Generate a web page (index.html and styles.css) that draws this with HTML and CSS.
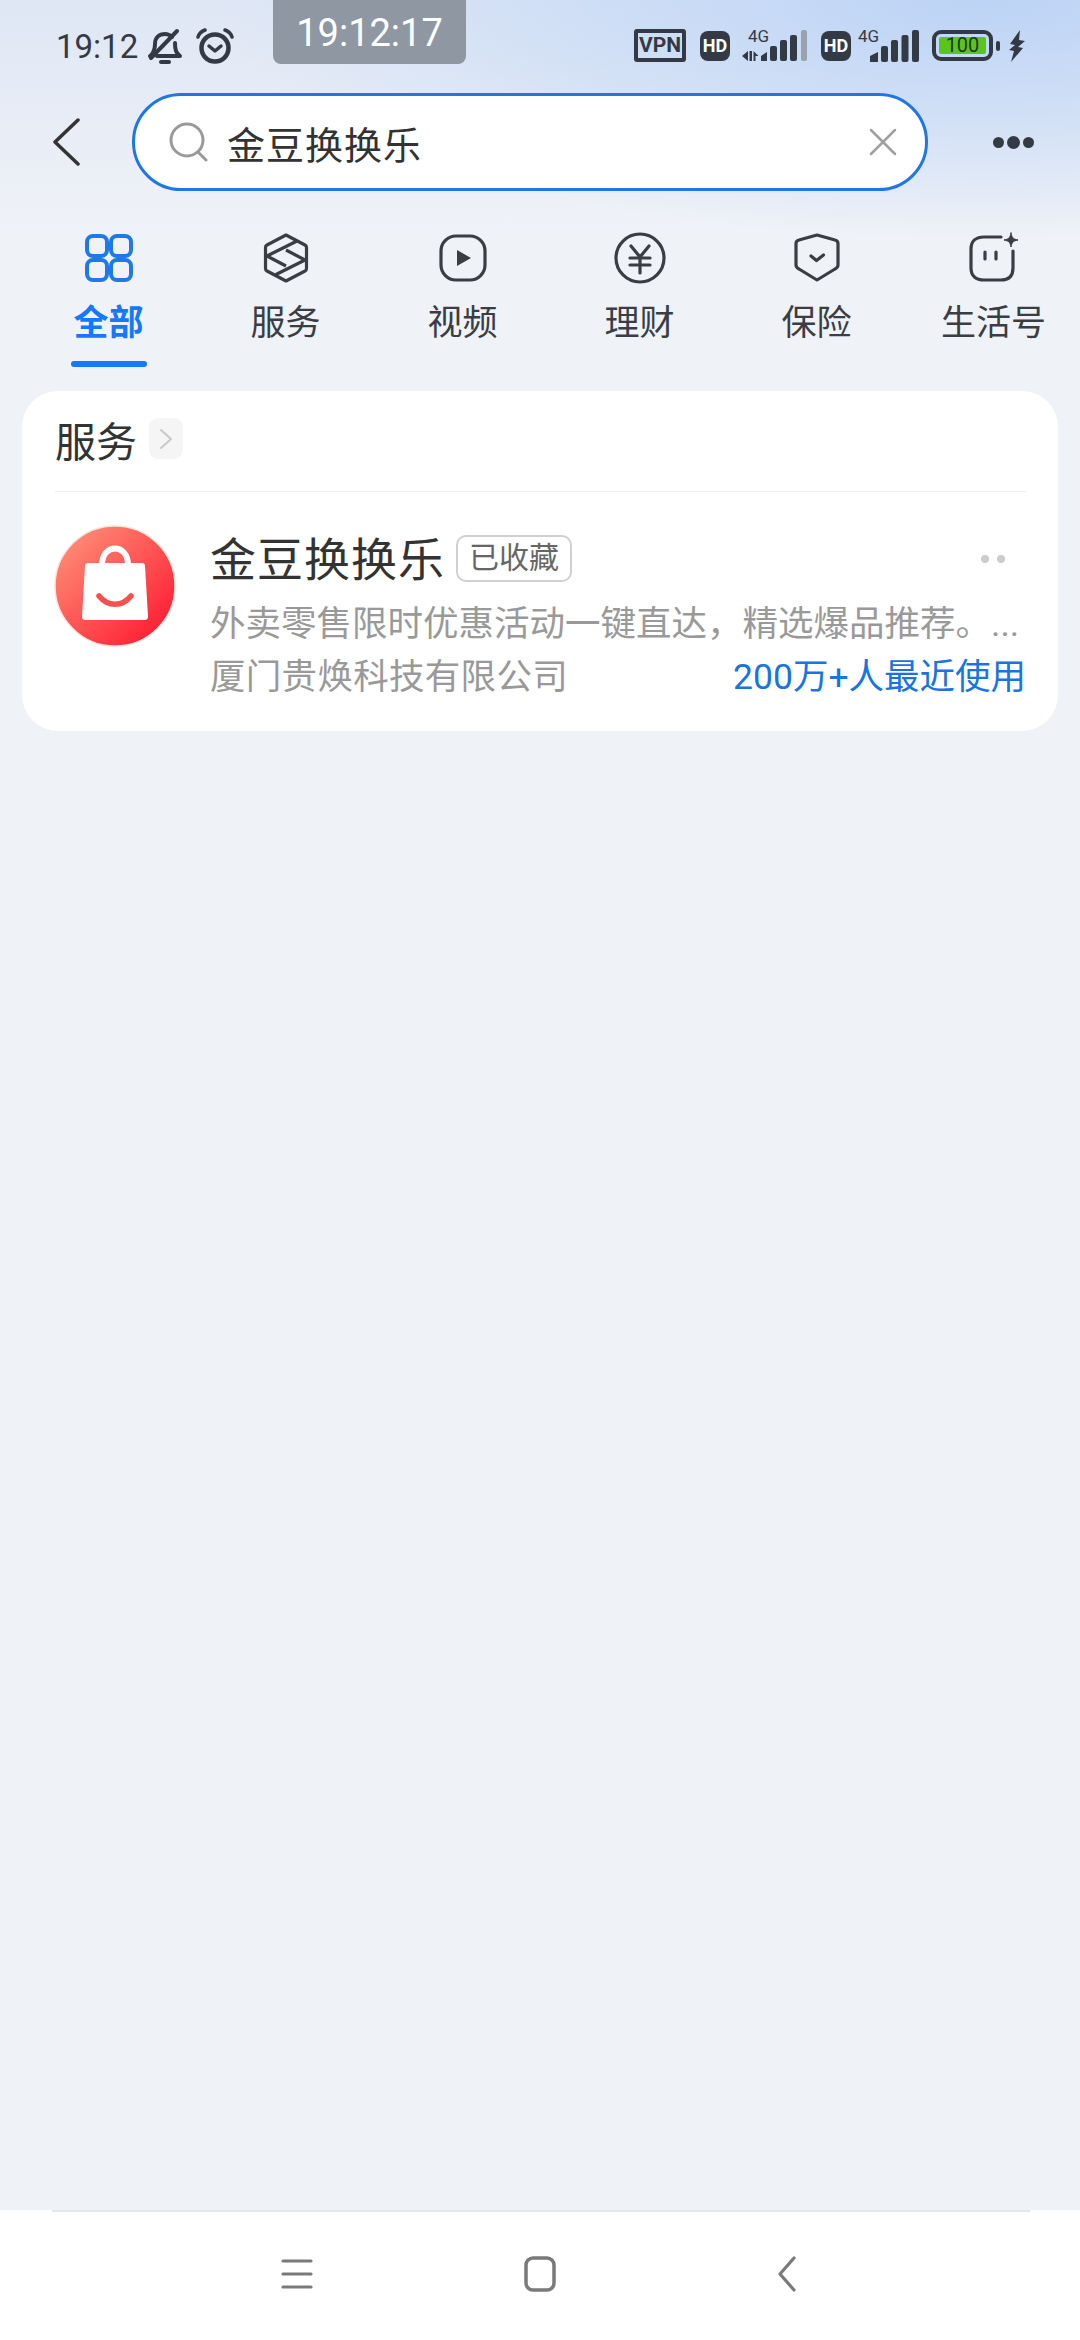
FILE: index.html
```html
<!DOCTYPE html>
<html>
<head>
    <title>金豆换换乐</title>
    <link rel="stylesheet" href="styles.css">
</head>
<body>
    <div class="toast">19:12:17</div>

    <div class="status-bar">
        <span class="status-time">19:12</span>
        <svg class="status-bell" width="36" height="38" viewBox="0 0 36 38" fill="none" stroke="#343a45" stroke-width="4" stroke-linecap="round" stroke-linejoin="round">
            <path d="M3 28c4-3 5-6 5-12 0-6 4-10 10-10 3 0 5 1 7 3M28 15c0 7 1 10 5 13H10"/>
            <path d="M30 3L4 30"/>
            <path d="M14 34h8" stroke-width="4"/>
        </svg>
        <svg class="status-alarm" width="38" height="36" viewBox="0 0 38 36" fill="none" stroke="#343a45" stroke-linecap="round" stroke-linejoin="round">
            <circle cx="19" cy="20" r="13.5" stroke-width="4.5"/>
            <path d="M13 18l6 5 6-5" stroke-width="3.5"/>
            <path d="M2 9c1-3 4-6 7-7M36 9c-1-3-4-6-7-7" stroke-width="3.5"/>
        </svg>

        <div class="status-right">
            <span class="vpn-box">VPN</span>
            <span class="hd-box hd-first">HD</span>
            <svg class="signal signal-first" width="68" height="42" viewBox="0 -8 68 42">
                <text class="net-text" x="7" y="13">4G</text>
                <path fill="#343a45" d="M1 27l6-5v10zM8.500 22h2.500v10H8.500zM12.500 22l5 5h-3v5h-2zM20 27l6-4v9h-6z"/>
                <rect x="29" y="17" width="7" height="15" rx="2" fill="#343a45"/>
                <rect x="39" y="11" width="7" height="21" rx="2" fill="#343a45"/>
                <rect x="49" y="6" width="7" height="26" rx="2" fill="#343a45"/>
                <rect x="60" y="1" width="6" height="31" rx="2" fill="#9aa3ad"/>
            </svg>
            <span class="hd-box hd-second">HD</span>
            <svg class="signal signal-second" width="62" height="42" viewBox="0 -8 62 42">
                <text class="net-text" x="1" y="13">4G</text>
                <path fill="#343a45" d="M13 27l8-4v10h-8z"/>
                <rect x="24" y="17" width="7" height="16" rx="2" fill="#343a45"/>
                <rect x="34" y="11" width="7" height="22" rx="2" fill="#343a45"/>
                <rect x="44.500" y="6" width="7" height="27" rx="2" fill="#343a45"/>
                <rect x="55" y="1" width="7" height="32" rx="2" fill="#343a45"/>
            </svg>
            <div class="battery">
                <div class="battery-fill">100</div>
            </div>
            <span class="battery-nub"></span>
            <svg class="bolt" width="18" height="32" viewBox="0 0 18 32" fill="#343a45">
                <path d="M12 0L2 14l5 1-6 5 5 1-3 11 12-14-5-1 7-6-6-1z"/>
            </svg>
        </div>
    </div>

    <div class="nav-row">
        <svg width="28" height="48" viewBox="0 0 28 48" fill="none" stroke="#333" stroke-width="3.5" stroke-linecap="round" stroke-linejoin="round">
            <path d="M26 2L3 24l23 22"/>
        </svg>
        <div class="search-box">
            <svg class="search-icon" width="40" height="40" viewBox="0 0 40 40" fill="none" stroke="#9a9a9a" stroke-width="3" stroke-linecap="round">
                <circle cx="18" cy="18" r="16"/>
                <path d="M30 31l7 7"/>
            </svg>
            <span class="search-text">金豆换换乐</span>
            <svg class="search-clear" width="28" height="28" viewBox="0 0 28 28" fill="none" stroke="#a0a0a0" stroke-width="2.500" stroke-linecap="round">
                <path d="M2 2l24 24M26 2L2 26"/>
            </svg>
        </div>
        <div class="more-dots"><i></i><i class="dot-mid"></i><i></i></div>
    </div>

    <div class="tabs">
        <div class="tab tab-active">
            <svg width="52" height="52" viewBox="0 0 52 52" fill="none" stroke="#1f7ae8" stroke-width="4">
                <rect x="4" y="4" width="20" height="20" rx="6"/>
                <rect x="28" y="4" width="20" height="20" rx="6"/>
                <rect x="4" y="28" width="20" height="20" rx="6"/>
                <rect x="28" y="28" width="20" height="20" rx="6"/>
            </svg>
            <span class="tab-label">全部</span>
            <span class="tab-line"></span>
        </div>
        <div class="tab">
            <svg width="52" height="52" viewBox="0 0 52 52" fill="none" stroke="#3a3d44" stroke-width="3.2" stroke-linejoin="round">
                <path d="M26 3l19 10c1 .5 1.500 1 1.500 2.500v21c0 1.500-.5 2-1.500 2.500L26 49 7 39c-1-.5-1.500-1-1.500-2.500v-21C5.500 14 6 13.500 7 13z"/>
                <path d="M37 9L7 24l19 10M15 43l30-15-19-10"/>
            </svg>
            <span class="tab-label">服务</span>
        </div>
        <div class="tab">
            <svg width="52" height="52" viewBox="0 0 52 52" fill="none" stroke="#3a3d44" stroke-width="3.2">
                <rect x="4" y="4" width="44" height="44" rx="15"/>
                <path d="M20 18l14 8-14 8z" fill="#3a3d44" stroke="none"/>
            </svg>
            <span class="tab-label">视频</span>
        </div>
        <div class="tab">
            <svg width="52" height="52" viewBox="0 0 52 52" fill="none" stroke="#3a3d44" stroke-width="3.2" stroke-linecap="round">
                <circle cx="26" cy="26" r="24"/>
                <path d="M17 14l9 11 9-11M16 26h20M16 33h20M26 25v16"/>
            </svg>
            <span class="tab-label">理财</span>
        </div>
        <div class="tab">
            <svg width="52" height="52" viewBox="0 0 52 52" fill="none" stroke="#3a3d44" stroke-width="3.2" stroke-linecap="round" stroke-linejoin="round">
                <path d="M26 3l18 5c2 .5 3 1.500 3 3.500V33c0 2-1 3-3 4L26 48 8 37c-2-1-3-2-3-4V11.500C5 9.500 6 8.500 8 8z"/>
                <path d="M20 24l5.500 4.500 7-5.500"/>
            </svg>
            <span class="tab-label">保险</span>
        </div>
        <div class="tab">
            <svg width="52" height="52" viewBox="0 0 52 52" fill="none" stroke="#3a3d44" stroke-width="3.2" stroke-linecap="round">
                <path d="M33 5H16C8 5 3 9 3 17v19c0 8 5 12 13 12h17c8 0 12-4 12-12V19"/>
                <path d="M17 20v7M28 20v7"/>
                <path d="M43 1c1 5 2 6 7 7-5 1-6 2-7 7-1-5-2-6-7-7 5-1 6-2 7-7z" fill="#3a3d44" stroke-width="1"/>
            </svg>
            <span class="tab-label">生活号</span>
        </div>
    </div>

    <div class="card">
        <div class="card-head">
            <span class="card-title">服务</span>
            <span class="card-arrow">
                <svg width="14" height="22" viewBox="0 0 14 22" fill="none" stroke="#c8c8c8" stroke-width="2" stroke-linecap="round" stroke-linejoin="round">
                    <path d="M2 2l10 9-10 9"/>
                </svg>
            </span>
        </div>
        <div class="app-row">
            <svg class="app-logo" width="122" height="122" viewBox="0 0 122 122">
                <defs>
                    <linearGradient id="logoGrad" x1="0" y1="0" x2="1" y2="1">
                        <stop offset="0" stop-color="#ff9a7e"/>
                        <stop offset="1" stop-color="#ff0f2a"/>
                    </linearGradient>
                </defs>
                <circle cx="61" cy="61" r="60" fill="url(#logoGrad)" stroke="#fbe3dc" stroke-width="1.500"/>
                <path d="M48 40c0-22 26-22 26 0" fill="none" stroke="#fff" stroke-width="6"/>
                <path d="M34 38c-2 0-3 1-3 3l-3 50c0 3 1 4 4 4h58c3 0 4-1 4-4l-3-50c0-2-1-3-3-3z" fill="#fff"/>
                <path d="M45 71c9 11 23 11 32 0" fill="none" stroke="#f9504f" stroke-width="5.500" stroke-linecap="round"/>
            </svg>
            <div class="app-info">
                <div class="app-title-row">
                    <span class="app-title">金豆换换乐</span>
                    <span class="app-tag">已收藏</span>
                    <span class="app-more"><i></i><i></i></span>
                </div>
                <div class="app-desc">
                    <span>外卖零售限时优惠活动一键直达，精选爆品推荐。</span>
                    <span>...</span>
                </div>
                <div class="app-foot">
                    <span class="app-company">厦门贵焕科技有限公司</span>
                    <span class="app-users">200万+人最近使用</span>
                </div>
            </div>
        </div>
    </div>

    <div class="bottom-bar">
        <svg width="32" height="30" viewBox="0 0 32 30" fill="none" stroke="#7a7a7a" stroke-width="3.2" stroke-linecap="round">
            <path d="M2 2h28M2 15h28M2 28h28"/>
        </svg>
        <svg class="home-key" width="32" height="36" viewBox="0 0 32 36" fill="none" stroke="#7a7a7a" stroke-width="3.500">
            <rect x="2" y="2" width="28" height="32" rx="7"/>
        </svg>
        <svg class="back-key" width="20" height="36" viewBox="0 0 20 36" fill="none" stroke="#7a7a7a" stroke-width="3.2" stroke-linecap="round" stroke-linejoin="round">
            <path d="M17 2L3 18l14 16"/>
        </svg>
    </div>
</body>
</html>
```

FILE: styles.css
```css
* {
    box-sizing: border-box;
}

html, body {
    margin: 0;
    padding: 0;
}

body {
    position: relative;
    display: flex;
    flex-direction: column;
    width: 1080px;
    height: 2340px;
    overflow: hidden;
    font-family: 'Roboto', 'Noto Sans CJK SC', sans-serif;
    color: #333;
    background-color: #eff2f7;
    background-image:
        radial-gradient(ellipse 760px 240px at 980px 0, #bdd4f6, rgba(189, 212, 246, 0) 100%),
        linear-gradient(180deg, #dfe7f5 0, #eff2f7 230px);
    background-repeat: no-repeat;
}

/* screen recorder clock, lies over the status bar */
.toast {
    position: absolute;
    left: 273px;
    top: 0;
    width: 193px;
    height: 64px;
    background: #8f97a3;
    border-radius: 0 0 8px 8px;
    color: white;
    font-size: 38px;
    line-height: 66px;
    text-align: center;
}

.status-bar {
    display: flex;
    align-items: center;
    height: 93px;
    padding: 0 54px 0 56px;
}

.status-time {
    font-size: 33px;
    color: #343a45;
    margin-top: -1px;
}

.status-bell {
    margin-left: 9px;
}

.status-alarm {
    margin-left: 13px;
    margin-top: -2px;
}

.status-right {
    display: flex;
    align-items: center;
    margin-left: auto;
    margin-top: -2px;
}

.vpn-box {
    width: 52px;
    height: 33px;
    border: 4px solid #343a45;
    border-radius: 3px;
    color: #343a45;
    font-size: 21px;
    font-weight: 700;
    line-height: 25px;
    text-align: center;
}

.hd-box {
    width: 30px;
    height: 30px;
    background: #343a45;
    border-radius: 8px;
    color: white;
    font-size: 18px;
    font-weight: 700;
    line-height: 30px;
    text-align: center;
}

.hd-first {
    margin-left: 14px;
}

.hd-second {
    margin-left: 12px;
}

.signal {
    margin-top: -8px;
}

.signal-first {
    margin-left: 11px;
}

.signal-second {
    margin-left: 6px;
}

.net-text {
    font-family: 'Roboto', sans-serif;
    font-size: 17px;
    fill: #343a45;
}

.battery {
    width: 61px;
    height: 31px;
    margin-left: 13px;
    padding: 3px;
    border: 4px solid #343a45;
    border-radius: 9px;
}

.battery-fill {
    height: 17px;
    background: #5cc41f;
    border-radius: 2px;
    color: #1d3a10;
    font-size: 20px;
    line-height: 17px;
    text-align: center;
}

.battery-nub {
    width: 4px;
    height: 10px;
    margin-left: 3px;
    background: #343a45;
    border-radius: 2px;
}

.bolt {
    margin-left: 8px;
}

.nav-row {
    display: flex;
    align-items: center;
    height: 98px;
    padding-left: 52px;
}

.search-box {
    display: flex;
    align-items: center;
    width: 796px;
    height: 98px;
    margin-left: 52px;
    padding-left: 34px;
    background: white;
    border: 3.500px solid #1f76e4;
    border-radius: 49px;
}

.search-text {
    margin-left: 18px;
    font-size: 38px;
    letter-spacing: 1px;
}

.search-clear {
    margin-left: auto;
    margin-right: 28px;
}

.more-dots {
    display: flex;
    align-items: center;
    gap: 3px;
    margin-left: 65px;
}

.more-dots i {
    width: 11px;
    height: 11px;
    background: #343a45;
    border-radius: 50%;
}

.more-dots .dot-mid {
    width: 13px;
    height: 13px;
}

.tabs {
    display: grid;
    grid-template-columns: repeat(6, 177px);
    height: 100px;
    padding-left: 20px;
    margin-top: 41px;
    margin-bottom: 59px;
}

.tab {
    display: flex;
    flex-direction: column;
    align-items: center;
}

.tab-label {
    margin-top: 15px;
    font-size: 35px;
    line-height: 50px;
    color: #3a3d44;
}

.tab-active .tab-label {
    color: #1677ff;
    font-weight: 700;
}

.tab-line {
    width: 76px;
    height: 6px;
    margin-top: 12px;
    background: #1677ff;
    border-radius: 3px;
}

.card {
    margin: 0 22px;
    height: 340px;
    padding: 0 32px 0 33px;
    background: white;
    border-radius: 36px;
}

.card-head {
    display: flex;
    align-items: center;
    height: 101px;
    padding-bottom: 5px;
    border-bottom: 1.500px solid #eeeeee;
}

.card-title {
    font-size: 41px;
    color: #333;
}

.card-arrow {
    display: flex;
    align-items: center;
    justify-content: center;
    width: 34px;
    height: 41px;
    margin-left: 12px;
    background: #f5f5f5;
    border-radius: 9px;
}

.app-row {
    display: flex;
    padding-top: 33px;
}

.app-logo {
    flex-shrink: 0;
    margin-left: -1px;
}

.app-info {
    flex: 1;
    margin-left: 34px;
    margin-right: 2px;
    padding-top: 1px;
}

.app-title-row {
    display: flex;
    align-items: center;
    height: 48px;
    margin-top: 7px;
}

.app-title {
    font-size: 46px;
    letter-spacing: 1px;
    color: #333;
    margin-top: -3px;
}

.app-tag {
    width: 116px;
    height: 47px;
    margin-left: 11px;
    margin-top: 2px;
    border: 2px solid #d0d0d0;
    border-radius: 10px;
    color: #666;
    font-size: 30px;
    line-height: 41px;
    text-align: center;
}

.app-more {
    display: flex;
    gap: 8px;
    margin-left: auto;
    margin-right: 21px;
    margin-top: 3px;
}

.app-more i {
    width: 8px;
    height: 8px;
    background: #cccccc;
    border-radius: 50%;
}

.app-desc {
    display: flex;
    justify-content: space-between;
    margin-top: 16px;
    margin-right: 7px;
    font-size: 35.500px;
    line-height: 54px;
    color: #999;
    white-space: nowrap;
}

.app-foot {
    display: flex;
    justify-content: space-between;
    font-size: 35.500px;
    line-height: 52px;
    color: #999;
}

.app-company {
    letter-spacing: .3px;
}

.app-users {
    color: #1a73e0;
}

.bottom-bar {
    position: relative;
    display: flex;
    align-items: center;
    margin-top: auto;
    height: 130px;
    padding: 0 0 3px 281px;
    background: white;
}

/* divider stops short of the screen edges */
.bottom-bar::before {
    content: "";
    position: absolute;
    left: 52px;
    right: 50px;
    top: 0;
    height: 2px;
    background: #e6e6e6;
}

.home-key {
    margin-left: 211px;
}

.back-key {
    margin-left: 221px;
}
```
